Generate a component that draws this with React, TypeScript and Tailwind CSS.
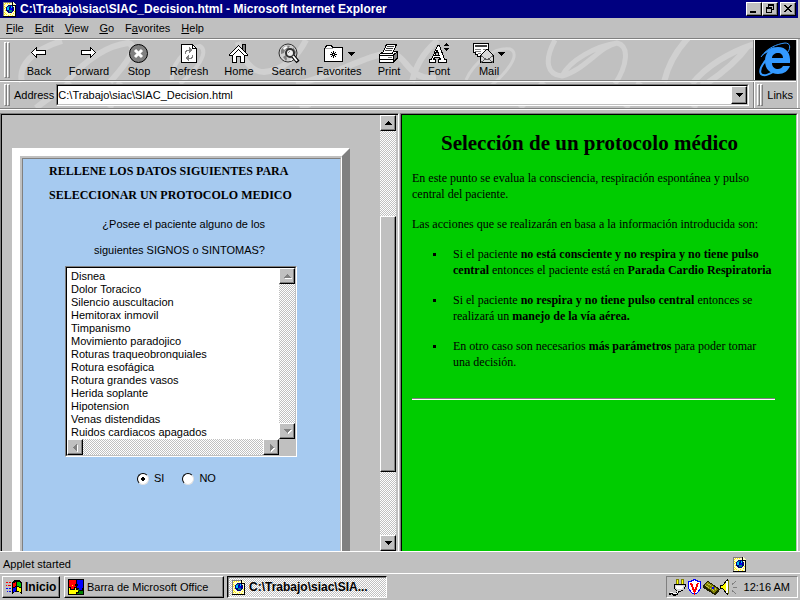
import React from "react";

const SANS = "font-['Liberation_Sans',Arial,sans-serif]";
const DITHER =
  "bg-[conic-gradient(#ffffff_25%,#c0c0c0_0_50%,#ffffff_0_75%,#c0c0c0_0)] bg-[length:2px_2px]";
const RAISED =
  "border border-t-white border-l-white border-r-black border-b-black bg-[#c0c0c0] shadow-[inset_-1px_-1px_0_#808080]";

type Dir = "up" | "down" | "left" | "right";

const ARROWS: Record<Dir, string> = {
  up: "M4 2h1v1h1v1h1v1h1v1H1V5h1V4h1V3h1z",
  down: "M1 2h7v1H7v1H6v1H5v1H4V5H3V4H2V3H1z",
  left: "M6 1v7H5V7H4V6H3V5H2V4h1V3h1V2h1V1z",
  right: "M3 1v7h1V7h1V6h1V5h1V4H6V3H5V2H4V1z",
};

function Arrow({ dir, disabled = false }: { dir: Dir; disabled?: boolean }) {
  return (
    <svg width="9" height="9" viewBox="0 0 9 9" shapeRendering="crispEdges" aria-hidden="true">
      {disabled && <path d={ARROWS[dir]} fill="#fff" transform="translate(1 1)" />}
      <path d={ARROWS[dir]} fill={disabled ? "#808080" : "#000"} />
    </svg>
  );
}

function ScrollButton({ dir, disabled = false, label }: { dir: Dir; disabled?: boolean; label: string }) {
  return (
    <button
      type="button"
      aria-label={label}
      className={`flex size-4 shrink-0 items-center justify-center ${RAISED}`}
    >
      <Arrow dir={dir} disabled={disabled} />
    </button>
  );
}

function PageIcon() {
  return (
    <svg width="13" height="15" viewBox="0 0 13 15" shapeRendering="crispEdges" className="shrink-0" aria-hidden="true">
      <path d="M0 0h10l3 3v12H0z" fill="#ffffc8" />
      <path d="M0 0h10v1H1v13H0z" fill="#808080" />
      <path d="M12 3h1v12H0v-1h12zM9 0h1v3h3v1H9z" fill="#000" />
      <path d="M2 1h1v1H2zM4 1h1v1H4zM6 1h1v1H6zM1 2h1v1H1zM1 4h1v1H1zM2 5h1v1H2zM1 6h1v1H1zM2 8h1v1H2zM1 10h1v1H1zM2 11h1v1H2zM1 12h1v1H1zM3 12h1v1H3zM5 13h1v1H5zM7 12h1v1H7zM9 13h1v1H9zM10 11h1v1h-1zM11 9h1v1h-1z" fill="#ffe800" />
      <path d="M5 3h4v1h1v1h1v4h-1v1H9v1H5v-1H4V9H3V5h1V4h1z" fill="#000080" />
      <path d="M5 4h2v1H6v1H5zM6 8h3v2H6z" fill="#008080" />
      <path d="M4 5h2v3H4zM8 4h1v2H8z" fill="#00c0ff" />
      <path d="M7 6h2v2H7z" fill="#0000ff" />
    </svg>
  );
}

const svg20 = { width: 22, height: 22, viewBox: "0 0 22 22", shapeRendering: "crispEdges" as const, "aria-hidden": true };

const BackIcon = () => (
  <svg {...svg20}>
    <path d="M3.5 9.5l5-5v3h9v4h-9v3z" fill="#fff" stroke="#000" />
  </svg>
);
const ForwardIcon = () => (
  <svg {...svg20}>
    <path d="M17.5 9.5l-5-5v3h-9v4h9v3z" fill="#fff" stroke="#000" />
  </svg>
);
const StopIcon = () => (
  <svg {...svg20} shapeRendering="auto">
    <circle cx="10.500" cy="10.500" r="9" fill="#808080" stroke="#000" />
    <path d="M7 7l7 7M14 7l-7 7" stroke="#fff" strokeWidth="3" />
  </svg>
);
const RefreshIcon = () => (
  <svg {...svg20}>
    <path d="M3.500 1.500h11l4 4v14h-15z" fill="#fff" stroke="#000" />
    <path d="M14.500 1.500v4h4" fill="none" stroke="#000" />
    <path d="M7.500 11V8h1V7h3M10 15.500h3v-1h1v-3" fill="none" stroke="#808080" />
    <path d="M11 4l4 3-4 3zM11 12l-4 3 4 3z" fill="#808080" />
  </svg>
);
const HomeIcon = () => (
  <svg {...svg20}>
    <path d="M4.500 11v8.500h12V11L10.500 5z" fill="#fff" stroke="#000" />
    <path d="M14.500 6V1.500h3V9" fill="#808080" stroke="#000" />
    <path d="M1.500 11.500l9-9 9 9v1h-3l-6-6-6 6h-3z" fill="#fff" stroke="#000" />
    <path d="M8.500 19.500v-6h4v6" fill="#c0c0c0" stroke="#000" />
  </svg>
);
const SearchIcon = () => (
  <svg {...svg20} shapeRendering="auto">
    <circle cx="10" cy="10" r="9" fill="#d0d0d0" stroke="#303030" />
    <path d="M3 7c2-4 6-5 9-4l-2 3-3 1-1 3-3 1zM5 14l3-2 1 4-1 2zM15 4l3 5-1 3-2-4z" fill="#808080" />
    <path d="M5 5l3-2 2 1-4 3zM12 17l4-2-3 3z" fill="#fff" />
    <circle cx="12" cy="10" r="4" fill="#f0f0f0" stroke="#303030" strokeWidth="2" />
    <path d="M10 10l2-2" stroke="#909090" />
    <path d="M15 13l5 6" stroke="#000" strokeWidth="4" />
    <path d="M15 13l4 5" stroke="#fff" strokeWidth="2" />
  </svg>
);
const FavoritesIcon = () => (
  <svg {...svg20}>
    <path d="M1.500 18.500v-13h1v-2h1v-1h5v1h1v1h10v14z" fill="#fff" stroke="#000" />
    <path d="M2 5.500h8" stroke="#a0a0a0" />
    <path d="M10.500 8v7M7 11.500h7M8 9l5 5M13 9l-5 5" stroke="#000" />
    <path d="M10 11h1v1h-1z" fill="#fff" />
  </svg>
);
const PrintIcon = () => (
  <svg {...svg20}>
    <path d="M1.500 11.500l4-3h14v7l-4 4h-14z" fill="#fff" stroke="#000" />
    <path d="M15.500 12v7l4-4V8.500z" fill="#808080" stroke="#000" />
    <path d="M4.500 10.500l4-9h10l-4 9z" fill="#fff" stroke="#000" />
    <path d="M9 3.500h7M8 5.500h7M7 7.500h7" stroke="#404040" />
    <path d="M2 12.500h14M2 16.500h13" stroke="#000" />
    <path d="M10 14h4v1h-4z" fill="#808080" />
  </svg>
);
const FontIcon = () => (
  <svg {...svg20}>
    <path
      d="M9.500 2.500h2l5 14h2v3h-8v-3h2l-1-2h-5l-1 2h2v3h-6v-3h2zM9 7l-2 5h4z"
      fill="#fff"
      stroke="#000"
      fillRule="evenodd"
    />
    <path d="M18 0h1v1h1v1h1v1h-5V2h1V1h1zM16 5h5v1h-1v1h-1v1h-1V7h-1V6h-1z" fill="#000" />
  </svg>
);
const MailIcon = () => (
  <svg {...svg20}>
    <path d="M.5.500h15v13h-11v-2h-2v-2h-2z" fill="#fff" stroke="#000" />
    <path d="M2 2h12v2H2z" fill="#404040" />
    <path d="M2 6.500h6M2 8.500h6M5 10.500h3M10 6.500h4" stroke="#808080" />
    <path d="M7.500 12.500l6-6h1l6 6v7h-13z" fill="#d8d8d8" stroke="#000" />
    <path d="M8 12.500l5 4h2l5-4M8 19.500l5-4M20 19.500l-5-4" stroke="#606060" fill="none" />
  </svg>
);

const TOOLS: { label: string; icon: () => React.ReactElement; menu?: boolean }[] = [
  { label: "Back", icon: BackIcon },
  { label: "Forward", icon: ForwardIcon },
  { label: "Stop", icon: StopIcon },
  { label: "Refresh", icon: RefreshIcon },
  { label: "Home", icon: HomeIcon },
  { label: "Search", icon: SearchIcon },
  { label: "Favorites", icon: FavoritesIcon, menu: true },
  { label: "Print", icon: PrintIcon },
  { label: "Font", icon: FontIcon },
  { label: "Mail", icon: MailIcon, menu: true },
];

const MENUS = [
  ["", "F", "ile"],
  ["", "E", "dit"],
  ["", "V", "iew"],
  ["", "G", "o"],
  ["F", "a", "vorites"],
  ["", "H", "elp"],
];

const SIGNS = [
  "Disnea",
  "Dolor Toracico",
  "Silencio auscultacion",
  "Hemitorax inmovil",
  "Timpanismo",
  "Movimiento paradojico",
  "Roturas traqueobronquiales",
  "Rotura esofágica",
  "Rotura grandes vasos",
  "Herida soplante",
  "Hipotension",
  "Venas distendidas",
  "Ruidos cardiacos apagados",
];

function Grip() {
  return (
    <span className="flex shrink-0 self-stretch py-0.5" aria-hidden="true">
      <span className="w-[3px] border border-t-white border-l-white border-r-[#808080] border-b-[#808080]" />
      <span className="w-[3px] border border-t-white border-l-white border-r-[#808080] border-b-[#808080]" />
    </span>
  );
}

function Swirls() {
  return (
    <svg className="pointer-events-none absolute top-0 left-0" width="754" height="68" viewBox="0 40 754 68" aria-hidden="true">
      <g fill="none" stroke="#d0d0d0" strokeWidth="6">
        <path d="M22 82C18 66 32 50 62 41" />
        <path d="M66 82C84 62 104 46 128 43C140 46 126 64 110 82M36 108C48 98 60 92 70 82" />
        <path d="M172 82C170 66 184 48 200 46C210 52 196 70 180 84" strokeWidth="4" />
        <path d="M238 42C242 60 252 72 264 72C284 70 298 56 306 40" />
        <path d="M296 84C330 78 370 52 393 53C408 58 408 80 436 78M412 82C416 64 426 50 438 40" />
        <path d="M466 80C474 62 494 47 510 49C522 54 506 74 488 88" strokeWidth="3" />
        <path d="M555 40C543 62 548 75 562 76C585 70 600 46 617 43C630 46 627 66 615 84M562 76C570 60 596 46 617 43" strokeWidth="5" />
        <path d="M664 82C668 65 675 52 688 38M692 84C706 66 730 52 754 44M706 84C724 72 738 60 748 46" />
        <path d="M110 108l10-26M300 108l10-4M520 108l24-26M626 108l14-26M694 108l10-26" />
      </g>
    </svg>
  );
}

function IeLogo() {
  return (
    <svg width="41" height="40" viewBox="0 0 41 40" className="block" aria-hidden="true">
      <path d="M0 0h41v40H0z" fill="#000" />
      <path
        d="M35 23H17c0 4 3 6 6 6 2 0 4-1 5-3h7c-2 5-6 8-12 8-8 0-13-5-13-13S15 7 23 7s13 6 12 16zM17 18h11c0-3-2-5-5-5s-6 2-6 5z"
        fill="#3399ff"
        fillRule="evenodd"
      />
      <path d="M6 17C12 8 22 4 30 3c5 0 6 4 3 9" fill="none" stroke="#3399ff" strokeWidth="1" />
      <path d="M6 17C10 11 15 8 20 7l-4 4c-4 1-7 3-10 6z" fill="#3399ff" />
      <path d="M11 20C6 26 4 31 6 34c2 2 7 1 12-2" fill="none" stroke="#3399ff" strokeWidth="2" />
    </svg>
  );
}

function TitleButton({ label, d }: { label: string; d: string }) {
  return (
    <button type="button" aria-label={label} className={`flex h-[14px] w-4 items-center justify-center ${RAISED}`}>
      <svg width="10" height="10" viewBox="0 0 10 10" shapeRendering="crispEdges" aria-hidden="true">
        <path d={d} fill="#000" fillRule="evenodd" />
      </svg>
    </button>
  );
}

function Bullet({ children }: { children: React.ReactNode }) {
  return (
    <li className="flex gap-[17px]">
      <span className="mt-[7px] size-[3px] shrink-0 bg-black" aria-hidden="true" />
      <span>{children}</span>
    </li>
  );
}

export default function App() {
  return (
    <div className={`flex h-screen w-full flex-col overflow-hidden bg-[#c0c0c0] text-[11px] leading-[13px] text-black ${SANS}`}>
      <div className="shrink-0 pr-0.5">
        <header className="flex h-[18px] items-center gap-1 bg-[#000080] pr-0.5 pl-[3px] text-white">
          <PageIcon />
          <h1 className="flex-1 truncate text-[12px] leading-4 font-bold">
            C:\Trabajo\siac\SIAC_Decision.html - Microsoft Internet Explorer
          </h1>
          <div className="flex gap-0.5">
            <div className="flex">
              <TitleButton label="Minimize" d="M1 7h6v2H1z" />
              <TitleButton label="Restore" d="M3 0h6v6H7V5h1V2H4v1H3zM1 3h6v6H1zM2 5v3h4V5z" />
            </div>
            <TitleButton label="Close" d="M1 1h2v1h1v1h2V2h1V1h2v1H8v1H7v1H6v1h1v1h1v1h1v1H7V7H6V6H4v1H3v1H1V7h1V6h1V5h1V4H3V3H2V2H1z" />
          </div>
        </header>
      </div>

      <nav className="flex h-5 shrink-0 items-center gap-[11px] pl-1.5">
        {MENUS.map(([a, b, c]) => (
          <button type="button" key={a + b + c}>
            {a}
            <u>{b}</u>
            {c}
          </button>
        ))}
      </nav>

      <section className="shrink-0 border-t border-[#808080] pr-0.5">
        <div className="relative border-t border-r border-white pr-px">
          <Swirls />
          <div className="relative flex h-10 items-stretch pl-1">
            <Grip />
            <div className="flex flex-1 pl-1">
              {TOOLS.map(({ label, icon: Icon, menu }) => (
                <button type="button" key={label} className="flex w-[50px] flex-col items-center pt-[3px]">
                  <span className="flex h-[22px] items-center gap-0.5">
                    <Icon />
                    {menu && (
                      <svg width="9" height="9" viewBox="0 0 9 9" shapeRendering="crispEdges" aria-hidden="true">
                        <path d={ARROWS.down} />
                      </svg>
                    )}
                  </span>
                  <span>{label}</span>
                </button>
              ))}
            </div>
            <div className="border-l border-[#808080]">
              <div className="border-l border-white">
                <IeLogo />
              </div>
            </div>
          </div>
          <div className="relative border-t border-[#808080]">
            <div className="flex h-[27px] items-center border-t border-white pl-1">
              <Grip />
              <label htmlFor="address" className="pr-0.5 pl-1">
                Address
              </label>
              <div className="flex h-[22px] min-w-0 flex-1 border border-t-[#808080] border-r-white border-b-white border-l-[#808080] bg-white">
                <div className="flex min-w-0 flex-1 border border-t-black border-r-[#c0c0c0] border-b-[#c0c0c0] border-l-black">
                  <input
                    id="address"
                    type="text"
                    defaultValue="C:\Trabajo\siac\SIAC_Decision.html"
                    className="min-w-0 flex-1 bg-white outline-none"
                  />
                  <button type="button" aria-label="Show addresses" className={`flex w-4 items-center justify-center ${RAISED}`}>
                    <Arrow dir="down" />
                  </button>
                </div>
              </div>
              <span className="ml-1 flex items-center self-stretch border-l border-[#808080]">
                <span className="flex items-center self-stretch border-l border-white pl-0.5">
                  <Grip />
                  <a href="#links" className="pr-[3px] pl-1">
                    Links
                  </a>
                </span>
              </span>
            </div>
          </div>
        </div>
      </section>
      <div className="h-0.5 shrink-0 border-t border-b border-t-[#808080] border-b-white" />

      <main className="mt-[3px] flex min-h-0 flex-1 border-b border-white pr-0.5">
        <section className="flex w-1/2 border border-r-white border-b-0 border-t-[#808080] border-l-[#808080]">
          <div className="flex min-w-0 flex-1 border-t border-l border-black">
            <form className="flex min-w-0 flex-1 overflow-hidden pt-[33px] pr-[30px] pl-[10px]">
              <div className="flex flex-1 border-8 border-b-0 border-white border-r-[#808080]">
                <div className="flex flex-1 border-2 border-r border-b-0 border-[#c0c0c0] border-r-white">
                  <div className="flex-1 border border-b-0 border-[#808080] border-r-[#c0c0c0] bg-[#a6caf0] pl-[26px]">
                    <h2 className="font-['Liberation_Serif','Times_New_Roman',serif] text-[12px] leading-6 font-bold">
                      RELLENE LOS DATOS SIGUIENTES PARA
                      <br />
                      SELECCIONAR UN PROTOCOLO MEDICO
                    </h2>
                    <label htmlFor="signs" className="mt-1 block w-[216px] text-right leading-[26px]">
                      ¿Posee el paciente alguno de los
                      <br />
                      siguientes SIGNOS o SINTOMAS?
                    </label>
                    <div className="mt-[3px] ml-4 w-[232px] border border-t-[#808080] border-r-white border-b-white border-l-[#808080]">
                      <div className="border border-t-black border-r-[#c0c0c0] border-b-[#c0c0c0] border-l-black bg-[#c0c0c0]">
                        <div className="flex h-[171px]">
                          <select
                            id="signs"
                            multiple
                            size={13}
                            className="h-full min-w-0 flex-1 appearance-none overflow-hidden bg-white pt-0.5 pl-1 outline-none"
                          >
                            {SIGNS.map((s) => (
                              <option key={s} className="block h-[13px] min-h-0 p-0 text-[11px] leading-[13px]">
                                {s}
                              </option>
                            ))}
                          </select>
                          <div className={`flex w-4 flex-col justify-between ${DITHER}`}>
                            <ScrollButton dir="up" disabled label="Scroll list up" />
                            <ScrollButton dir="down" disabled label="Scroll list down" />
                          </div>
                        </div>
                        <div className={`mr-4 flex justify-between ${DITHER}`}>
                          <ScrollButton dir="left" disabled label="Scroll list left" />
                          <ScrollButton dir="right" disabled label="Scroll list right" />
                        </div>
                      </div>
                    </div>
                    <div className="mt-[15px] ml-[88px] flex gap-[18px]">
                      {["SI", "NO"].map((v) => (
                        <label key={v} className="flex items-center gap-[5px]">
                          <input
                            type="radio"
                            name="present"
                            defaultChecked={v === "SI"}
                            className="size-3 appearance-none rounded-full border border-t-black border-r-[#e0e0e0] border-b-[#e0e0e0] border-l-black bg-white checked:bg-[radial-gradient(circle,#000_2px,#fff_2px)]"
                          />
                          {v}
                        </label>
                      ))}
                    </div>
                  </div>
                </div>
              </div>
            </form>
            <div className={`mr-0.5 flex w-4 flex-col ${DITHER}`}>
              <ScrollButton dir="up" label="Scroll up" />
              <div className="h-[85px]" />
              <div className={`h-[256px] ${RAISED}`} />
              <div className="flex-1" />
              <ScrollButton dir="down" label="Scroll down" />
            </div>
          </div>
        </section>

        <section className="ml-px flex flex-1 border-t border-r border-l border-[#808080] border-r-white">
          <article className="flex-1 border-t border-r border-l border-black border-r-[#c0c0c0] bg-[#00cc00] pt-[14px] pr-[21px] pl-[10px] font-['Liberation_Serif','Times_New_Roman',serif] text-[12px] leading-4">
            <h2 className="pr-2 text-center text-[21px] leading-7 font-bold">Selección de un protocolo médico</h2>
            <p className="mt-[13px]">
              En este punto se evalua la consciencia, respiración espontánea y pulso central del paciente.
            </p>
            <p className="mt-[14px]">Las acciones que se realizarán en basa a la información introducida son:</p>
            <ul className="mt-[14px] space-y-[14px] pl-[21px]">
              <Bullet>
                Si el paciente <b>no está consciente y no respira y no tiene pulso central</b> entonces el paciente está en{" "}
                <b>Parada Cardio Respiratoria</b>
              </Bullet>
              <Bullet>
                Si el paciente <b>no respira y no tiene pulso central</b> entonces se realizará un{" "}
                <b>manejo de la vía aérea.</b>
              </Bullet>
              <Bullet>
                En otro caso son necesarios <b>más parámetros</b> para poder tomar una decisión.
              </Bullet>
            </ul>
            <hr className="mt-7 h-0.5 border-t border-b border-t-[#808080] border-b-white" />
          </article>
        </section>
      </main>

      <footer className="shrink-0">
        <div className="flex h-[21px] items-center justify-between pt-1 pr-[54px] pl-[3px]">
          <span>Applet started</span>
          <PageIcon />
        </div>
        <div className="flex h-[27px] items-center border-t border-white px-0.5">
          <button type="button" className={`flex h-[22px] w-[58px] items-center gap-[3px] pl-[3px] text-[12px] font-bold ${RAISED}`}>
            <svg width="16" height="14" viewBox="0 0 16 14" shapeRendering="crispEdges" aria-hidden="true">
              <path d="M0 2h2v1H0zM3 2h2v1H3zM0 5h1v1H0zM2 5h3v1H2z" fill="#ff0000" />
              <path d="M0 8h2v1H0zM3 8h2v1H3zM1 11h1v1H1zM3 11h2v1H3z" fill="#0000ff" />
              <path d="M6 2l3-2h4l3 2v12l-3-2H9l-3 2z" fill="#000" />
              <path d="M7 3l3-1v4L7 7z" fill="#ff0000" />
              <path d="M11 2h2l2 1v4l-4-1z" fill="#00c000" />
              <path d="M7 8l3-1v4l-3 1z" fill="#0000ff" />
              <path d="M11 7l4 1v4l-4-1z" fill="#ffff00" />
            </svg>
            Inicio
          </button>
          <button type="button" className={`ml-1 flex h-[22px] w-40 items-center gap-[3px] pl-[3px] ${RAISED}`}>
            <svg width="16" height="16" viewBox="0 0 16 16" shapeRendering="crispEdges" aria-hidden="true">
              <path d="M0 0h16v16H0z" fill="#000" />
              <path d="M1 1h7v4H7v2h1v1H6v2H3V8H1z" fill="#ff0000" />
              <path d="M9 1h6v8h-1v2h-3V9H9V7h1V5H9z" fill="#0000ff" />
              <path d="M1 9h1v2h5V9h1v2h2v2H8v2H1z" fill="#ffff00" />
              <path d="M9 14h2v-4h-1v2h5v3H9z" fill="#008000" />
              <path d="M4 6h1v1H4z" fill="#ffff00" />
            </svg>
            Barra de Microsoft Office
          </button>
          <button
            type="button"
            className={`ml-[3px] flex h-[22px] w-40 items-center gap-1 border border-t-black border-r-white border-b-white border-l-black pt-px pl-1 text-[12px] font-bold shadow-[inset_1px_1px_0_#808080] ${DITHER}`}
          >
            <PageIcon />
            C:\Trabajo\siac\SIA...
          </button>
          <div className="ml-auto flex h-[22px] w-[132px] items-center justify-between border border-t-[#808080] border-r-white border-b-white border-l-[#808080] pr-[7px] pl-0.5">
            <svg width="68" height="18" viewBox="0 0 68 18" shapeRendering="crispEdges" aria-hidden="true">
              <path d="M7.500 1.500h2v5h-2zM12.500 1.500h2v5h-2z" fill="#ffff00" stroke="#808000" />
              <path d="M5.500 6.500h11v2l-2 3-3 2h-3l-3-3z" fill="#d8d8d8" stroke="#000" />
              <path d="M7 8h7v1l-2 2H8z" fill="#fff" />
              <path d="M9 13l-1 3-3 1-2-2-3 1" stroke="#000" fill="none" strokeWidth="2" />
              <path d="M8 13v2l-3 1-2-2-2 1" stroke="#fff" fill="none" />
              <path d="M19.500 3.500h2l4-2 4 2h2v7l-3 4-3 2-3-2-3-4z" fill="#fff" stroke="#0000ff" />
              <path d="M22 5l3.500 9L29 5" fill="none" stroke="#ff0000" strokeWidth="2" />
              <path d="M34 7l5-4 12 8-1 2-4 4-12-7z" fill="#202000" />
              <path d="M35 7l4-3 10 7-4 4z" fill="#808000" />
              <path d="M38 5l10 7M36 7l9 6" stroke="#c0c050" strokeDasharray="1 1" />
              <path d="M43 9h2v2h-2z" fill="#0000ff" />
              <path d="M51.500 7.500h2l5-6v15l-5-6h-2z" fill="#ffff00" stroke="#000" />
              <path d="M57 3h2v12h-2z" fill="#fff" />
              <path d="M59.500 2v14" stroke="#808000" />
              <path d="M64 9.500h4M63 6.500l4-3M63 12.500l4 3" stroke="#808080" />
            </svg>
            <time>12:16 AM</time>
          </div>
        </div>
      </footer>
    </div>
  );
}
